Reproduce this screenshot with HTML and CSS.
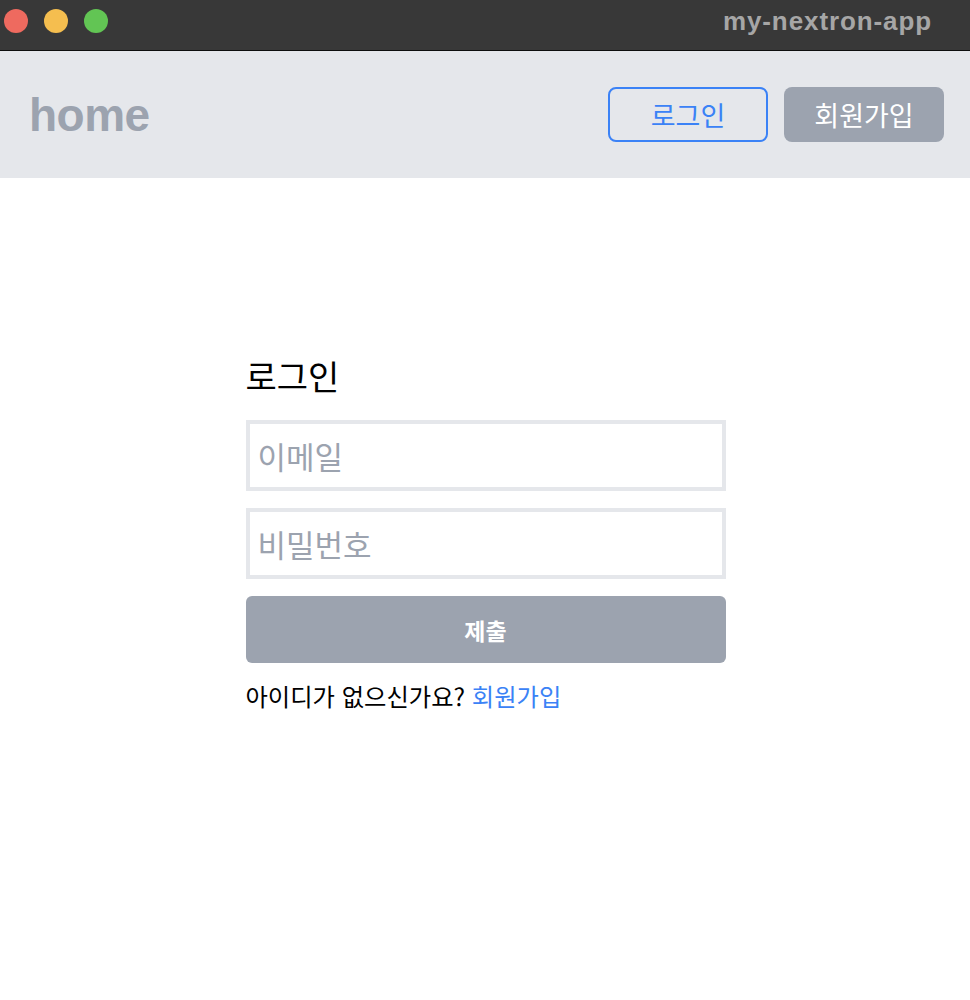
FILE: index.html
```html
<!DOCTYPE html>
<html lang="ko">
<head>
<meta charset="utf-8">
<title>my-nextron-app</title>
<link rel="stylesheet" href="styles.css">
</head>
<body>
<div class="titlebar">
  <span class="light red"></span>
  <span class="light yellow"></span>
  <span class="light green"></span>
  <span class="app-title">my-nextron-app</span>
</div>
<header class="header">
  <a class="brand" href="#">home</a>
  <nav class="nav">
    <a class="btn btn-outline" href="#">로그인</a>
    <a class="btn btn-solid" href="#">회원가입</a>
  </nav>
</header>
<main class="main">
  <form class="login-form">
    <h1 class="form-title">로그인</h1>
    <input class="field" type="email" placeholder="이메일">
    <input class="field" type="password" placeholder="비밀번호">
    <button class="submit" type="button">제출</button>
    <p class="signup-line">아이디가 없으신가요? <a class="signup-link" href="#">회원가입</a></p>
  </form>
</main>
</body>
</html>
```
FILE: styles.css
```css
* { box-sizing: border-box; }
html, body { margin: 0; padding: 0; background: #ffffff; }
body { font-family: "Noto Sans CJK KR", "Liberation Sans", sans-serif; color: #000; }

.titlebar {
  height: 51px;
  background: #383838;
  border-bottom: 1px solid #0e0e0e;
  display: flex;
  align-items: flex-start;
  padding: 9px 38px 0 4px;
  gap: 16px;
}
.light { width: 24px; height: 24px; border-radius: 50%; display: block; }
.red { background: #ee6a5f; }
.yellow { background: #f5be4f; }
.green { background: #62c554; }
.app-title {
  margin-left: auto;
  color: #a6a6a6;
  font-family: "Liberation Sans", sans-serif;
  font-weight: bold;
  font-size: 26px;
  line-height: 24px;
  letter-spacing: 0.9px;
}

.header {
  height: 127px;
  background: #e5e7eb;
  display: flex;
  align-items: center;
  justify-content: space-between;
  padding: 0 26px 0 29px;
}
.brand {
  font-family: "Liberation Sans", sans-serif;
  font-weight: bold;
  font-size: 46px;
  color: #9ca3af;
  text-decoration: none;
  letter-spacing: -0.5px;
}
.nav { display: flex; gap: 16px; }
.btn {
  width: 160px;
  height: 55px;
  border-radius: 8px;
  display: flex;
  align-items: center;
  justify-content: center;
  font-size: 27px;
  font-weight: 400;
  text-decoration: none;
}
.btn-outline { border: 2px solid #3b82f6; color: #3b82f6; }
.btn-solid { background: #9ca3af; color: #ffffff; }

.main { display: flex; justify-content: center; padding-top: 176px; padding-left: 1px; }
.login-form { width: 480px; display: flex; flex-direction: column; }
.form-title { margin: 0 0 22px; font-size: 34px; font-weight: 400; line-height: 44px; }
.field {
  height: 71px;
  border: 4px solid #e5e7eb;
  padding: 0 8px;
  font-family: inherit;
  font-size: 31px;
  margin-bottom: 17px;
  outline: none;
}
.field::placeholder { color: #9ca3af; }
.submit {
  height: 67px;
  border: none;
  border-radius: 6px;
  background: #9ca3af;
  color: #ffffff;
  font-family: inherit;
  font-weight: bold;
  font-size: 23px;
}
.signup-line { margin: 15px 0 0; font-size: 24.3px; line-height: 36px; }
.signup-link { color: #3b82f6; text-decoration: none; }
```
